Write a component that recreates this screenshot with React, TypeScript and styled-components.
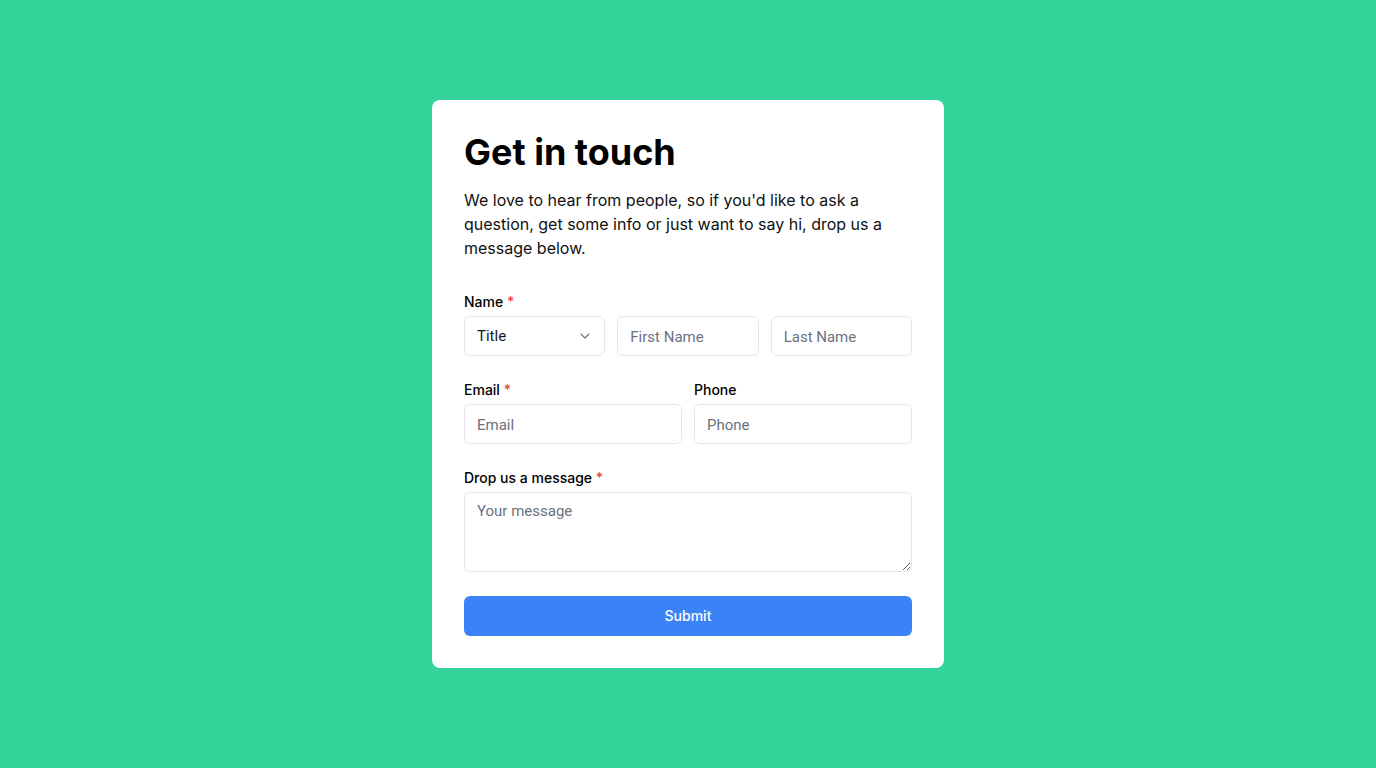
import styled, { createGlobalStyle } from "styled-components";
import { ChevronDown } from "lucide-react";

const GlobalStyle = createGlobalStyle`
  * {
    box-sizing: border-box;
  }

  body {
    margin: 0;
    background: #34d399;
    font-family: Inter, "Noto Sans", sans-serif;
    color: #111827;
  }
`;

function App() {
  return (
    <>
      <GlobalStyle />
      <Page>
        <Card>
          <Title>Get in touch</Title>
          <Intro>
            We love to hear from people, so if you'd like to ask a question,
            get some info or just want to say hi, drop us a message below.
          </Intro>

          <Form onSubmit={(e) => e.preventDefault()}>
            <Field>
              <Label>
                Name <Required>*</Required>
              </Label>
              <Row $cols={3}>
                <SelectWrap>
                  <Select defaultValue="">
                    <option value="">Title</option>
                    <option>Mr</option>
                    <option>Mrs</option>
                    <option>Ms</option>
                    <option>Dr</option>
                  </Select>
                  <Chevron size={16} strokeWidth={1.6} />
                </SelectWrap>
                <Input placeholder="First Name" />
                <Input placeholder="Last Name" />
              </Row>
            </Field>

            <Row $cols={2}>
              <Field>
                <Label>
                  Email <Required>*</Required>
                </Label>
                <Input type="email" placeholder="Email" />
              </Field>
              <Field>
                <Label>Phone</Label>
                <Input type="tel" placeholder="Phone" />
              </Field>
            </Row>

            <Field>
              <Label>
                Drop us a message <Required>*</Required>
              </Label>
              <TextArea placeholder="Your message" />
            </Field>

            <SubmitButton type="submit">Submit</SubmitButton>
          </Form>
        </Card>
      </Page>
    </>
  );
}

export default App;

const Page = styled.main`
  min-height: 100vh;
  display: flex;
  align-items: center;
  justify-content: center;
`;

const Card = styled.div`
  width: 512px;
  padding: 32px;
  background: #ffffff;
  border-radius: 8px;
`;

const Title = styled.h1`
  margin: 0;
  font-size: 36px;
  line-height: 40px;
  font-weight: 700;
  color: #000;
`;

const Intro = styled.p`
  margin: 16px 0 32px;
  font-size: 16px;
  line-height: 24px;
  color: #111;
`;

const Form = styled.form`
  display: flex;
  flex-direction: column;
  gap: 24px;
`;

const Field = styled.div`
  display: flex;
  flex-direction: column;
  gap: 4px;
`;

const Label = styled.label`
  font-size: 14px;
  line-height: 20px;
  font-weight: 500;
  color: #000;
`;

const Required = styled.span`
  color: #ef4444;
`;

const Row = styled.div<{ $cols: number }>`
  display: grid;
  grid-template-columns: repeat(${(p) => p.$cols}, 1fr);
  gap: 12px;
`;

const Input = styled.input`
  width: 100%;
  height: 40px;
  padding: 1px 12px 0;
  border: 1px solid #e5e7eb;
  border-radius: 6px;
  background: #fff;
  font-family: Roboto, "Noto Sans", sans-serif;
  font-size: 15px;
  color: #111827;
  outline: none;

  &::placeholder {
    color: #6b7280;
  }
`;

const SelectWrap = styled.div`
  position: relative;
`;

const Select = styled.select`
  width: 100%;
  height: 40px;
  padding: 0 12px;
  border: 1px solid #e5e7eb;
  border-radius: 6px;
  background: #fff;
  appearance: none;
  font-family: Roboto, "Noto Sans", sans-serif;
  font-size: 15px;
  color: #111827;
  outline: none;
`;

const Chevron = styled(ChevronDown)`
  position: absolute;
  right: 12px;
  top: 12px;
  color: #6b7280;
  pointer-events: none;
`;

const TextArea = styled.textarea`
  width: 100%;
  height: 80px;
  padding: 9px 12px;
  border: 1px solid #e5e7eb;
  border-radius: 6px;
  font-family: Roboto, "Noto Sans", sans-serif;
  font-size: 15px;
  color: #111827;
  outline: none;
  resize: vertical;
  display: block;

  &::placeholder {
    color: #6b7280;
  }
`;

const SubmitButton = styled.button`
  height: 40px;
  padding: 0 0 1px;
  border: none;
  border-radius: 6px;
  background: #3b82f6;
  color: #fff;
  font-family: Inter, "Noto Sans", sans-serif;
  font-size: 14px;
  font-weight: 500;
  cursor: pointer;
`;
